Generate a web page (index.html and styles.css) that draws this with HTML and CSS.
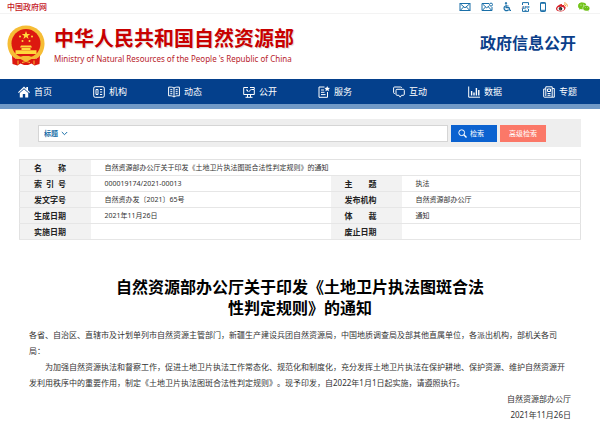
FILE: index.html
```html
<!DOCTYPE html>
<html lang="zh-CN">
<head>
    <meta charset="UTF-8">
    <meta name="viewport" content="width=device-width, initial-scale=1.0">
    <title>中华人民共和国自然资源部</title>
    <link rel="stylesheet" href="styles.css">
</head>
<body>
    <div class="topbar">
        <a class="gov-link" href="#">中国政府网</a>
        <div class="topbar-icons">
            <a href="#" aria-label="邮箱">
                <svg width="12" height="10" viewBox="0 0 12 10" class="line">
                    <rect x="1" y="1.5" width="10" height="7"/>
                    <path d="M1.5 2l4.5 3.8L10.5 2M1.5 8.2l3-3.2M10.5 8.2l-3-3.2"/>
                </svg>
            </a>
            <a href="#" aria-label="邮件订阅">
                <svg width="12" height="10" viewBox="0 0 12 10" class="line">
                    <path d="M8 1.5H1v7h10V5M1.5 2l4.2 3.8L8 4M1.5 8.2l3-3.2M10.5 8.2l-3-3.2"/>
                    <circle cx="10" cy="2.6" r="1.5"/>
                </svg>
            </a>
            <a href="#" aria-label="无障碍">
                <svg width="8" height="10" viewBox="0 0 8 10" class="line">
                    <circle cx="3" cy="1.2" r=".7" fill="#1a6fa8"/>
                    <path d="M3 2.5v3.2h3l1 2.8h1M3 4h2.6M2 4.2a2.5 2.5 0 1 0 3.6 3.4" stroke-width="1.2"/>
                </svg>
            </a>
            <a href="#" aria-label="APP">
                <svg width="9" height="10" viewBox="0 0 9 10" class="line">
                    <path d="M1.5 3V.6h6V3M1.5 7v2.4h6V7M3.6 8.3h1.8"/>
                    <text x="4.5" y="6.6" class="app-text">APP</text>
                </svg>
            </a>
            <a href="#" aria-label="手机版">
                <svg width="6" height="10" viewBox="0 0 6 10" class="line">
                    <rect x=".5" y=".5" width="5" height="9" rx=".6"/>
                    <path d="M.5 1.3h5M.5 8.3h5"/>
                </svg>
            </a>
            <a href="#" aria-label="微博">
                <svg width="12" height="10" viewBox="0 0 12 10">
                    <path fill="#d8232a" d="M4.6 2.2c1-.4 1.7 0 1.4 1 1.4-.5 2.6-.2 2.3 1 1 .3 1.5.9 1.3 1.8C9.2 8 7 9.5 4.6 9.5 2 9.5 0 8.4 0 6.7 0 5 2.6 2.7 4.6 2.2z"/>
                    <ellipse cx="4.7" cy="6.7" rx="3.4" ry="2" fill="#fff"/>
                    <circle cx="4.5" cy="6.7" r="1.8" fill="#222"/>
                    <circle cx="4" cy="7" r=".5" fill="#fff"/>
                    <path d="M8 .9a3 3 0 0 1 3.2 3.8M8.2 2.5a1.4 1.4 0 0 1 1.4 1.7" fill="none" stroke="#f39a2b" stroke-width=".9"/>
                </svg>
            </a>
            <a href="#" aria-label="微信">
                <svg width="12" height="10" viewBox="0 0 12 10">
                    <path fill="#74c41c" d="M4.2.6C1.9.6.2 2 .2 3.9c0 1 .5 1.9 1.4 2.5L1.2 7.7l1.5-.8 1.7.3z"/>
                    <ellipse cx="4.3" cy="3.9" rx="4" ry="3.3" fill="#74c41c"/>
                    <path fill="#6cbf16" stroke="#fff" stroke-width=".5" d="M8.3 3.4c2 0 3.5 1.3 3.5 2.9 0 .9-.5 1.6-1.2 2.1l.3 1.2-1.3-.7c-2.6.6-4.8-.7-4.8-2.6 0-1.6 1.5-2.9 3.5-2.9z"/>
                    <g fill="#fff"><circle cx="3" cy="3" r=".5"/><circle cx="5.6" cy="3" r=".5"/><circle cx="7.2" cy="5.6" r=".4"/><circle cx="9.5" cy="5.6" r=".4"/></g>
                </svg>
            </a>
        </div>
    </div>

    <header class="header">
        <svg class="emblem" width="38" height="42" viewBox="0 0 38 42">
            <path fill="#f6bd35" d="M19 .5C29.5.5 37.500 8.400 37.500 18.500c0 6-2.500 11-6 14.500H6.500C3 29.500.5 24.500.5 18.500.5 8.400 8.500.5 19 .5z"/>
            <circle cx="19" cy="18.500" r="14.500" fill="#dc1810"/>
            <path fill="#f6bd35" d="M8 30.500c3 1.500 6 1.500 8 .5h6c2 1 5 1 8-.5l-2 7H10z"/>
            <path fill="#dc1810" d="M5 30.500c2 3 5 4 8.500 3.500l3.500 2h4l3.500-2c3.500.5 6.500-.5 8.500-3.500l-.5 8.500-5 1.500-3-2-3.500 1.500h-4L13.500 38.500l-3 2-5-1.500z"/>
            <path fill="none" stroke="#f6bd35" d="M11 35.500v4M27 35.500v4M15 37.500l4-1 4 1"/>
            <path fill="#ffd83c" d="M19 6l1.100 3h3.100l-2.500 1.900.9 3-2.600-1.800-2.600 1.800.9-3L14.800 9h3.100z"/>
            <g fill="#ffd83c">
                <circle cx="13" cy="11.500" r="1"/><circle cx="25" cy="11.500" r="1"/>
                <circle cx="15.500" cy="16" r="1"/><circle cx="22.500" cy="16" r="1"/>
                <path d="M14 20.500h10l1 2H13zM14.500 23h9v2h-9zM8.500 25.300h21v3.700h-21z"/>
            </g>
        </svg>
        <div class="brand">
            <div class="brand-name">中华人民共和国自然资源部</div>
            <div class="brand-sub">Ministry of Natural Resources of the People 's Republic of China</div>
        </div>
        <div class="section-name">政府信息公开</div>
    </header>

    <nav class="nav">
        <a href="#">
            <svg width="12" height="12" viewBox="0 0 12 12" fill="#fff"><path d="M6 .5L0 6.300l.8.8L6 2.200l5.200 4.900.8-.8-2-2V1H8.300v1.700z"/><path d="M6 3.200L1.800 7.100v4.400h3V8h2.400v3.500h3V7.100z"/></svg>
            首页
        </a>
        <a href="#">
            <svg width="12" height="12" viewBox="0 0 12 12" class="nav-line"><rect x=".7" y=".7" width="10.600" height="10.600" rx="1.500"/><path d="M3 3.500h2v5H3zM7 3.500h2.200M7 6h2.200M7 8.500h2.200"/></svg>
            机构
        </a>
        <a href="#">
            <svg width="12" height="12" viewBox="0 0 12 12" class="nav-line"><path d="M6 2C4.500 1 2.500 1 .6 1.200v8.600C2.500 9.600 4.500 9.800 6 11c1.500-1.200 3.500-1.400 5.400-1.200V1.200C9.500 1 7.500 1 6 2zv9M2.300 3.700h2M2.300 5.700h2M2.300 7.700h2M7.700 3.700h2M7.700 5.700h2M7.700 7.700h2"/></svg>
            动态
        </a>
        <a href="#">
            <svg width="12" height="12" viewBox="0 0 12 12" class="nav-line"><path d="M5 1.500H.7v7h10.600V4M4.500 8.500v2.600M7.500 8.500v2.600M2.500 11.300h7M3 4h1.500v1.500M5.500 6L8.500 3M7 1.500h4.300v2H8.500"/></svg>
            公开
        </a>
        <a href="#">
            <svg width="12" height="12" viewBox="0 0 12 12" class="nav-line"><path d="M6.500 1H1v10.300h8.500V6M3 4h3M3 6.300h3.500M3 8.600h4.500"/><path d="M9.200 0l.8 1.700 2 .2-1.400 1.400.3 1.900-1.700-.9-1.700.9.300-1.900L6.400 1.900l2-.2z" fill="#fff" stroke="none"/></svg>
            服务
        </a>
        <a href="#">
            <svg width="12" height="12" viewBox="0 0 12 12" class="nav-line"><path d="M2 7.500H1.600a1 1 0 0 1-1-1V2a1 1 0 0 1 1-1h6a1 1 0 0 1 1 1"/><path d="M4 3.300h6.300a1 1 0 0 1 1 1v4a1 1 0 0 1-1 1H8.500l-1.300 1.900-1.300-1.900H4a1 1 0 0 1-1-1v-4a1 1 0 0 1 1-1z"/></svg>
            互动
        </a>
        <a href="#">
            <svg width="12" height="12" viewBox="0 0 12 12" class="nav-line"><path d="M.7.5v10.700h11.300"/><path d="M3.600 5v4.600M6 6.500v3.100M8.400 2v7.600M10.800 4v5.600" stroke-width="1.400"/></svg>
            数据
        </a>
        <a href="#">
            <svg width="12" height="12" viewBox="0 0 12 12" class="nav-line"><path d="M2.800.8h6.400v10.400H1.300a.6.600 0 0 1-.6-.6V3h2zM9.200 2.500h2.100v8.700H9.200M2.800 3v7M4.500 3h3v2.500h-3zM4.500 7.500h3M4.500 9.300h3"/></svg>
            专题
        </a>
    </nav>

    <main class="content">
        <form class="search">
            <div class="search-box">
                <select class="search-field" aria-label="检索范围">
                    <option>标题</option>
                </select>
                <svg width="7" height="5" viewBox="0 0 7 5" class="line"><path d="M.8 1l2.700 2.700L6.200 1"/></svg>
                <input class="search-input" type="text" aria-label="检索内容">
            </div>
            <button class="btn btn-search" type="submit">
                <svg width="9" height="9" viewBox="0 0 9 9" fill="none" stroke="#fff"><circle cx="3.700" cy="3.700" r="2.900"/><path d="M5.800 5.800l2.700 2.700" stroke-width="1.400"/></svg>
                检索
            </button>
            <button class="btn btn-advanced" type="button">高级检索</button>
        </form>

        <table class="info">
            <colgroup>
                <col class="col-label">
                <col class="col-wide">
                <col class="col-label">
                <col>
            </colgroup>
            <tr>
                <th scope="row">名　　称</th>
                <td colspan="3">自然资源部办公厅关于印发《土地卫片执法图斑合法性判定规则》的通知</td>
            </tr>
            <tr>
                <th scope="row">索&ensp;引&ensp;号</th>
                <td>000019174/2021-00013</td>
                <th scope="row">主　　题</th>
                <td>执法</td>
            </tr>
            <tr>
                <th scope="row">发文字号</th>
                <td>自然资办发〔2021〕65号</td>
                <th scope="row">发布机构</th>
                <td>自然资源部办公厅</td>
            </tr>
            <tr>
                <th scope="row">生成日期</th>
                <td>2021年11月26日</td>
                <th scope="row">体　　裁</th>
                <td>通知</td>
            </tr>
            <tr>
                <th scope="row">实施日期</th>
                <td></td>
                <th scope="row">废止日期</th>
                <td></td>
            </tr>
        </table>

        <article class="article">
            <h1>自然资源部办公厅关于印发《土地卫片执法图斑合法<br>性判定规则》的通知</h1>
            <p>各省、自治区、直辖市及计划单列市自然资源主管部门，新疆生产建设兵团自然资源局，中国地质调查局及部其他直属单位，各派出机构，部机关各司局：</p>
            <p class="indent">为加强自然资源执法和督察工作，促进土地卫片执法工作常态化、规范化和制度化，充分发挥土地卫片执法在保护耕地、保护资源、维护自然资源开发利用秩序中的重要作用，制定《土地卫片执法图斑合法性判定规则》。现予印发，自2022年1月1日起实施，请遵照执行。</p>
            <p class="sign">自然资源部办公厅</p>
            <p class="sign">2021年11月26日</p>
        </article>
    </main>
</body>
</html>
```
FILE: styles.css
```css
* {
    margin: 0;
    padding: 0;
    box-sizing: border-box;
}

body {
    background-color: #fff;
    color: #333;
    font-family: "Noto Sans", "Noto Sans CJK SC", sans-serif;
    font-size: 8px;
    line-height: 16px;
    text-spacing-trim: space-all;
}

a {
    text-decoration: none;
}

svg {
    display: block;
    flex-shrink: 0;
}

.line {
    fill: none;
    stroke: #1a6fa8;
}

.topbar {
    display: flex;
    justify-content: space-between;
    align-items: center;
    padding: 0 10px 0 7px;
    line-height: 13px;
    border-bottom: 1px solid #f3f3f3;
}

.gov-link {
    color: #c4161c;
    font-weight: 500;
}

.topbar-icons {
    display: flex;
    align-items: center;
    gap: 10px;
}

.app-text {
    font-size: 4px;
    font-weight: bold;
    text-anchor: middle;
    fill: #1a6fa8;
    stroke: none;
}

.header {
    display: flex;
    align-items: center;
    padding: 11px 24px 12px 7px;
}

.brand {
    margin-left: 9px;
}

.brand-name {
    font-size: 20px;
    line-height: 26px;
    font-weight: bold;
    color: #c80000;
    text-shadow: 1px 1px 1px #ddd;
}

.brand-sub {
    font-size: 8px;
    line-height: 14px;
    color: #b8232b;
}

.section-name {
    margin-left: auto;
    font-size: 16px;
    line-height: 20px;
    padding-bottom: 6px;
    font-weight: bold;
    color: #0b3f8a;
}

.nav {
    display: grid;
    grid-template-columns: repeat(8, 1fr);
    background-color: #04408c;
    border-bottom: 5px solid #7099c7;
}

.nav a {
    display: flex;
    align-items: center;
    gap: 4px;
    padding-left: 18px;
    font-size: 9px;
    line-height: 25px;
    color: #fff;
}

.nav-line {
    fill: none;
    stroke: #fff;
}

.content {
    padding: 10px 19px;
}

.search {
    display: flex;
    gap: 3px;
    padding: 6px 35px 5px 19px;
    background-color: #eee;
}

.search-box {
    display: flex;
    flex: 1;
    align-items: center;
    padding-left: 5px;
    background-color: #fff;
    border: 1px solid #d5d5d5;
}

.search-field {
    appearance: none;
    width: 17px;
    border: none;
    background: none;
    font-family: inherit;
    font-size: 7px;
    font-weight: bold;
    color: #1a6fa8;
}

.search-input {
    flex: 1;
    min-width: 0;
    height: 15px;
    padding: 0 6px;
    border: none;
    outline: none;
    font-family: inherit;
    font-size: 7px;
}

.btn {
    display: flex;
    align-items: center;
    justify-content: center;
    gap: 3px;
    width: 46px;
    border: none;
    background-color: #0b62d0;
    color: #fff;
    font-family: inherit;
    font-size: 7px;
    line-height: 17px;
}

.btn-search {
    justify-content: flex-start;
    padding-left: 7px;
}

.btn-advanced {
    background-color: #fb7868;
}

.info {
    width: 100%;
    margin-top: 12px;
    border-collapse: collapse;
    table-layout: fixed;
    border: 1px solid #e2e2e2;
}

.col-label {
    width: 71px;
}

.col-wide {
    width: 240px;
}

.info th,
.info td {
    height: 16px;
    padding-left: 14px;
    border-bottom: 1px solid #e6e6e6;
    font-size: 7px;
    line-height: 15px;
    text-align: left;
}

.info th {
    background-color: #f2f2f2;
    font-size: 8px;
    color: #222;
}

.article {
    padding: 37px 10px 0;
}

.article h1 {
    margin-bottom: 8px;
    font-size: 16px;
    line-height: 21px;
    text-align: center;
    color: #000;
}

.indent {
    text-indent: 2em;
}

.sign {
    text-align: right;
}
```
